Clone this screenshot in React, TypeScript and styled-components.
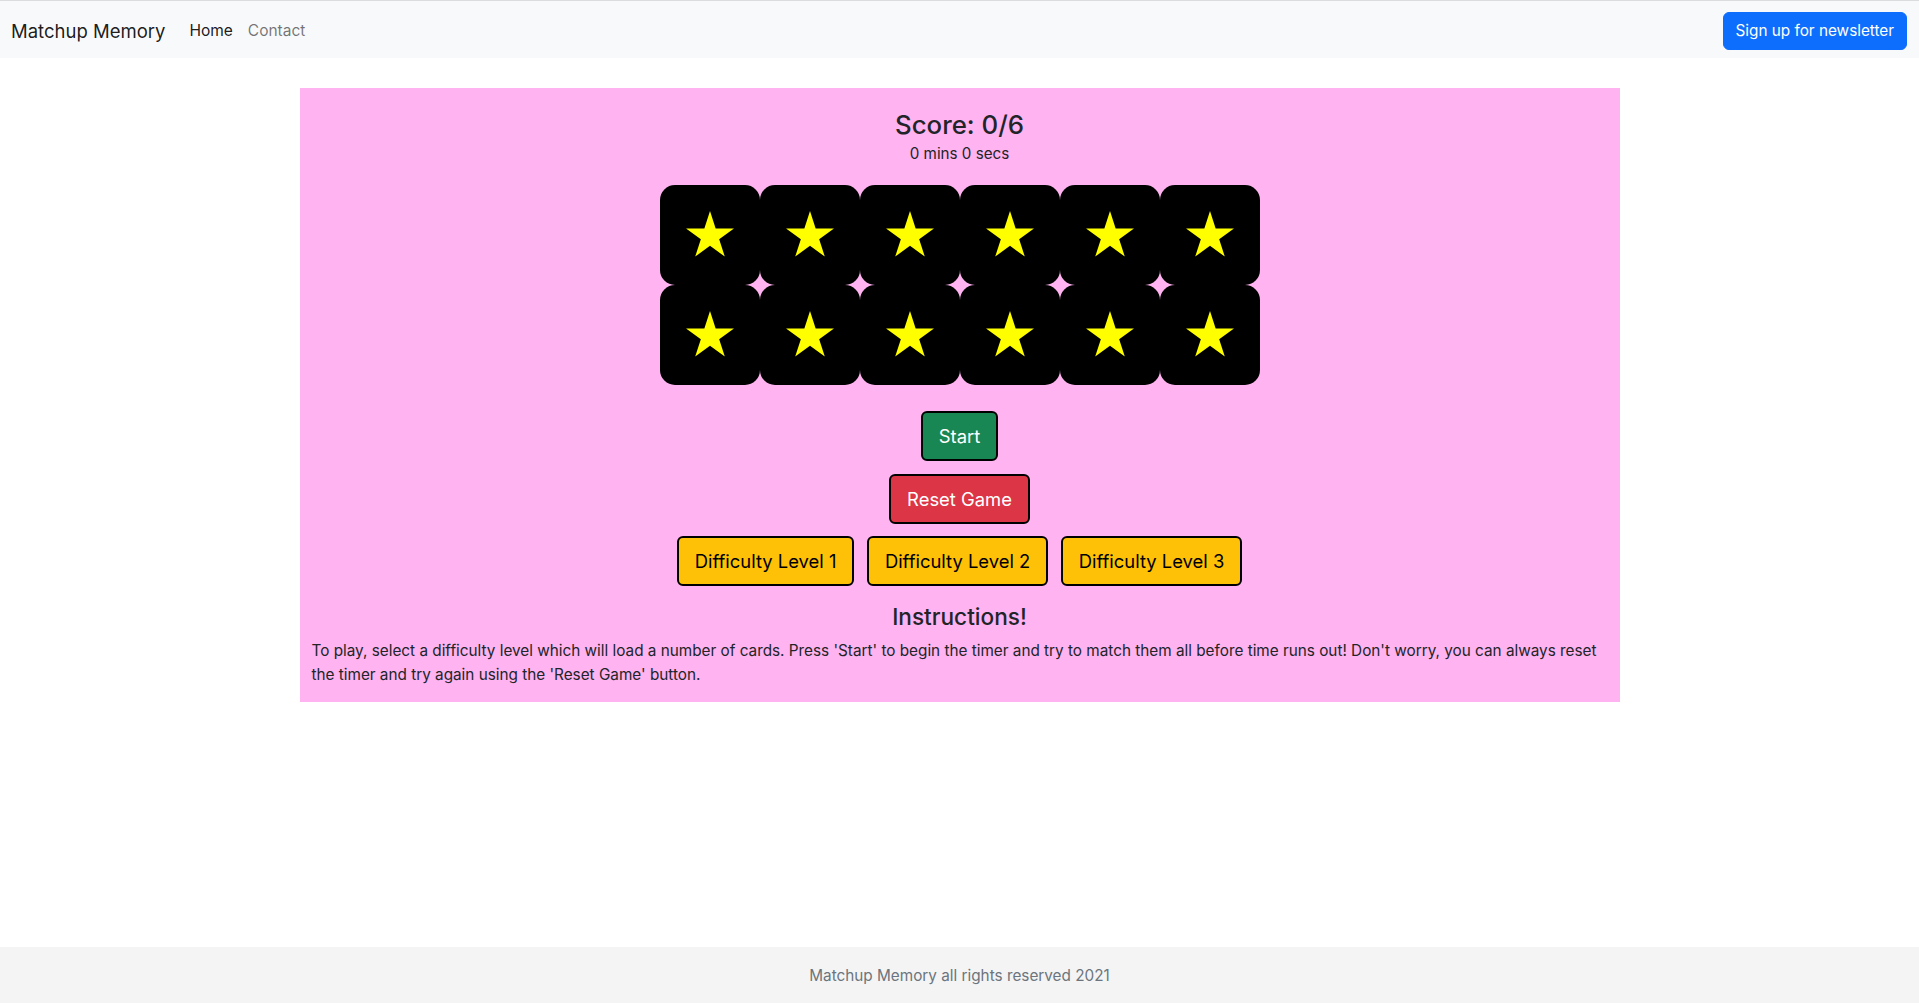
import React from "react";
import styled, { createGlobalStyle } from "styled-components";

const GlobalStyle = createGlobalStyle`
  *, *::before, *::after { box-sizing: border-box; }
  html, body { margin: 0; padding: 0; }
  body {
    font-family: "Inter", "Liberation Sans", sans-serif;
    font-size: 15.3px;
    line-height: 1.5;
    color: #212529;
    background: #ffffff;
  }
`;

const Page = styled.div`
  min-height: 100vh;
  display: flex;
  flex-direction: column;
`;

const NavBar = styled.nav`
  height: 58px;
  border-top: 1px solid #dcdcdc;
  background: #f8f9fa;
  display: flex;
  align-items: center;
  padding: 2px 12px 0 11px;
`;

const Brand = styled.a`
  font-size: 18.5px;
  line-height: 30px;
  color: rgba(0, 0, 0, 0.9);
  text-decoration: none;
  margin-right: 24px;
`;

const NavLinks = styled.div`
  display: flex;
  gap: 15px;
  flex: 1;
`;

const NavLink = styled.a<{ $active?: boolean }>`
  font-size: 15.5px;
  line-height: 24px;
  color: ${(p) => (p.$active ? "rgba(0,0,0,0.9)" : "rgba(0,0,0,0.55)")};
  text-decoration: none;
`;

const NewsletterButton = styled.button`
  font-family: inherit;
  font-size: 15.3px;
  line-height: 24px;
  padding: 6px 12px;
  border: 1px solid #0d6efd;
  border-radius: 6px;
  background: #0d6efd;
  color: #fff;
`;

const Main = styled.main`
  flex: 1;
  display: flex;
  justify-content: center;
  align-items: flex-start;
  padding-top: 30px;
`;

const GameBox = styled.section`
  width: 1320px;
  background: #ffb3f0;
  padding: 19.5px 12px 15px;
  display: flex;
  flex-direction: column;
  align-items: center;
`;

const Score = styled.h3`
  margin: 0;
  font-size: 25.8px;
  line-height: 34.5px;
  font-weight: 500;
`;

const Timer = styled.div`
  font-size: 15.2px;
  line-height: 24px;
`;

const CardGrid = styled.div`
  margin-top: 19px;
  display: grid;
  grid-template-columns: repeat(6, 100px);
  grid-auto-rows: 100px;
`;

const Card = styled.div`
  background: #000;
  border-radius: 15px;
  display: flex;
  align-items: center;
  justify-content: center;
`;

const StarIcon = styled.svg`
  width: 48px;
  height: 45.6px;
  margin-top: -2px;
`;

const Controls = styled.div`
  margin-top: 26px;
  display: flex;
  flex-direction: column;
  align-items: center;
  gap: 12.5px;
`;

const ButtonRow = styled.div`
  display: flex;
  gap: 12.5px;
`;

const GameButton = styled.button<{ $bg: string; $fg: string }>`
  font-family: inherit;
  font-size: 18.4px;
  line-height: 30px;
  padding: 8px 16px;
  border: 2px solid #000;
  border-radius: 6px;
  background: ${(p) => p.$bg};
  color: ${(p) => p.$fg};
`;

const InstructionsTitle = styled.h4`
  margin: 17px 0 9px;
  font-size: 22.6px;
  line-height: 27px;
  font-weight: 500;
`;

const Instructions = styled.p`
  margin: 0;
  align-self: stretch;
  font-size: 15.3px;
  line-height: 24px;
`;

const Footer = styled.footer`
  height: 56px;
  padding-top: 3px;
  background: #f4f4f4;
  display: flex;
  align-items: center;
  justify-content: center;
  color: #6c757d;
  font-size: 15.3px;
`;

const Star = () => (
  <StarIcon viewBox="1.22 0 47.56 45.23">
    <polygon
      fill="#ffff00"
      points="25,0 30.61,17.27 48.78,17.27 34.08,27.95 39.69,45.23 25,34.55 10.31,45.23 15.92,27.95 1.22,17.27 19.39,17.27"
    />
  </StarIcon>
);

export default function App() {
  const cards = Array.from({ length: 12 }, (_, i) => i);
  return (
    <>
      <GlobalStyle />
      <Page>
        <NavBar>
          <Brand href="#">Matchup Memory</Brand>
          <NavLinks>
            <NavLink $active href="#">Home</NavLink>
            <NavLink href="#">Contact</NavLink>
          </NavLinks>
          <NewsletterButton>Sign up for newsletter</NewsletterButton>
        </NavBar>
        <Main>
          <GameBox>
            <Score>Score: 0/6</Score>
            <Timer>0 mins 0 secs</Timer>
            <CardGrid>
              {cards.map((i) => (
                <Card key={i}>
                  <Star />
                </Card>
              ))}
            </CardGrid>
            <Controls>
              <GameButton $bg="#198754" $fg="#fff">Start</GameButton>
              <GameButton $bg="#dc3545" $fg="#fff">Reset Game</GameButton>
              <ButtonRow>
                <GameButton $bg="#ffc107" $fg="#000">Difficulty Level 1</GameButton>
                <GameButton $bg="#ffc107" $fg="#000">Difficulty Level 2</GameButton>
                <GameButton $bg="#ffc107" $fg="#000">Difficulty Level 3</GameButton>
              </ButtonRow>
            </Controls>
            <InstructionsTitle>Instructions!</InstructionsTitle>
            <Instructions>
              To play, select a difficulty level which will load a number of cards. Press 'Start' to begin the timer and try to match them all before time runs out! Don't worry, you can always reset the timer and try again using the 'Reset Game' button.
            </Instructions>
          </GameBox>
        </Main>
        <Footer>Matchup Memory all rights reserved 2021</Footer>
      </Page>
    </>
  );
}
